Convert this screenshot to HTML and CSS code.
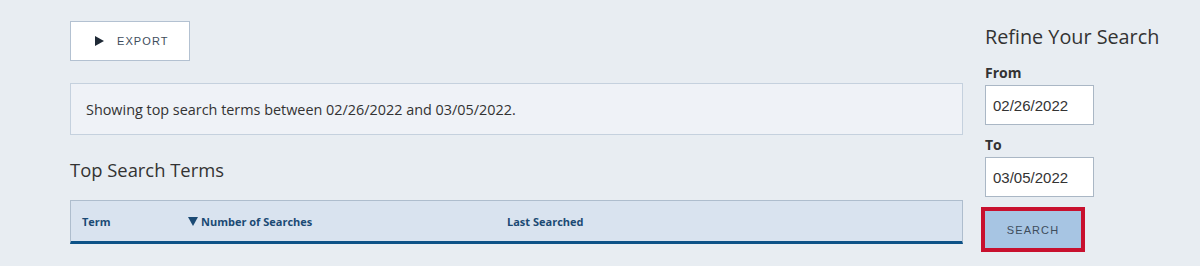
FILE: index.html
```html
<!DOCTYPE html>
<html>
<head>
<meta charset="utf-8">
<link rel="stylesheet" href="styles.css">
</head>
<body>
<div class="page">
  <main class="main">
    <button class="export-btn"><svg class="play" width="9" height="10" viewBox="0 0 9 10"><path d="M0 0 L9 5 L0 10 Z" fill="#1f2a36"/></svg>EXPORT</button>
    <div class="info">Showing top search terms between 02/26/2022 and 03/05/2022.</div>
    <h2 class="section-title">Top Search Terms</h2>
    <div class="table-head">
      <div class="col col-term">Term</div>
      <div class="col col-num"><svg class="sort" width="10" height="9" viewBox="0 0 10 9"><path d="M0 0 L10 0 L5 9 Z" fill="#1b4a74"/></svg>Number of Searches</div>
      <div class="col col-last">Last Searched</div>
    </div>
  </main>
  <aside class="side">
    <h2 class="side-title">Refine Your Search</h2>
    <label class="lbl lbl-from">From</label>
    <input class="date" type="text" value="02/26/2022">
    <label class="lbl lbl-to">To</label>
    <input class="date" type="text" value="03/05/2022">
    <div class="focus-ring"><button class="search-btn">SEARCH</button></div>
  </aside>
</div>
</body>
</html>
```
FILE: styles.css
```css
html, body {
  margin: 0;
  padding: 0;
  background: #e8edf2;
  height: 266px;
  overflow: hidden;
}
body {
  font-family: "Open Sans", "Noto Sans", sans-serif;
  color: #333;
}
.page {
  display: flex;
  gap: 22px;
  padding-left: 70px;
}
.main {
  width: 893px;
  display: flex;
  flex-direction: column;
  align-items: flex-start;
}
.export-btn {
  margin-top: 21px;
  width: 120px;
  height: 40px;
  box-sizing: border-box;
  background: #fff;
  border: 1px solid #b3c1d1;
  font-family: "Liberation Sans", Arial, sans-serif;
  font-size: 11px;
  letter-spacing: 1.1px;
  color: #3e4d5c;
  display: flex;
  align-items: center;
  padding: 0 0 0 24px;
}
.play {
  margin-right: 13px;
}
.info {
  margin-top: 22px;
  box-sizing: border-box;
  width: 893px;
  height: 52px;
  background: #eff2f7;
  border: 1px solid #c5d1de;
  padding: 0 15px;
  display: flex;
  align-items: center;
  font-size: 14.4px;
  color: #333;
}
.section-title {
  margin: 22px 0 0;
  font-size: 18.4px;
  font-weight: 400;
  line-height: 26px;
  color: #333;
}
.table-head {
  margin-top: 17px;
  box-sizing: border-box;
  width: 893px;
  height: 44px;
  background: #d9e3ef;
  border: 1px solid #aebdcd;
  border-bottom: 3px solid #0d5287;
  display: flex;
  align-items: center;
  font-size: 11px;
  font-weight: 700;
  color: #1b4a74;
}
.col-term { width: 106px; padding-left: 11px; }
.col-num { width: 319px; display: flex; align-items: center; }
.sort { margin-right: 3px; }
.side {
  width: 190px;
  display: flex;
  flex-direction: column;
  align-items: flex-start;
}
.side-title {
  margin: 24px 0 0;
  font-size: 19.8px;
  font-weight: 400;
  line-height: 26px;
  color: #333;
}
.lbl {
  font-size: 14px;
  font-weight: 700;
  color: #333;
  line-height: 18px;
}
.lbl-from { margin-top: 14px; }
.lbl-to { margin-top: 11px; }
.date {
  margin-top: 3px;
  box-sizing: border-box;
  width: 109px;
  height: 40px;
  border: 1px solid #aab7c5;
  background: #fff;
  font-family: "Liberation Sans", Arial, sans-serif;
  font-size: 15px;
  color: #333;
  padding: 0 7px;
  outline: none;
}
.focus-ring {
  margin-top: 10px;
  margin-left: -4px;
  border: 4px solid #c8102e;
  display: flex;
}
.search-btn {
  width: 96px;
  height: 37px;
  border: 0;
  background: #a7c5e3;
  font-family: "Liberation Sans", Arial, sans-serif;
  font-size: 11px;
  letter-spacing: 1.1px;
  color: #3e4d5c;
  padding: 0;
}
```
